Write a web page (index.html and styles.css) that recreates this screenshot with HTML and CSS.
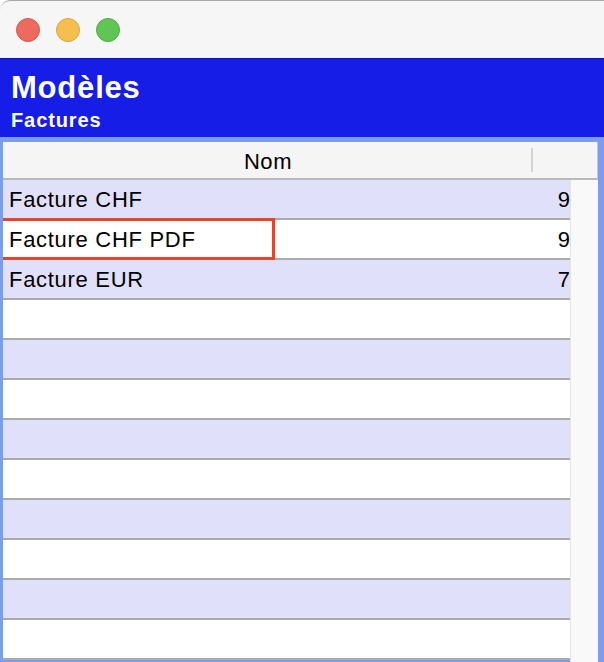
FILE: index.html
```
<!DOCTYPE html>
<html lang="fr">
<head>
<meta charset="utf-8">
<title>Modèles</title>
<link rel="stylesheet" href="styles.css">
</head>
<body>
<div class="window">
  <div class="titlebar">
    <span class="light red"></span>
    <span class="light yellow"></span>
    <span class="light green"></span>
  </div>
  <div class="banner">
    <div class="title">Modèles</div>
    <div class="subtitle">Factures</div>
  </div>
  <div class="frame">
    <div class="thead">
      <div class="th th-name">Nom</div>
      <div class="th th-num"></div>
    </div>
    <div class="tbody-wrap">
      <div class="tbody">
        <div class="row alt"><span class="name">Facture CHF</span><span class="num">9</span></div>
        <div class="row selected"><span class="name">Facture CHF PDF</span><span class="num">9</span><span class="mark"></span></div>
        <div class="row alt"><span class="name">Facture EUR</span><span class="num">7</span></div>
        <div class="row"></div>
        <div class="row alt"></div>
        <div class="row"></div>
        <div class="row alt"></div>
        <div class="row"></div>
        <div class="row alt"></div>
        <div class="row"></div>
        <div class="row alt"></div>
        <div class="row"></div>
      </div>
      <div class="scroll"></div>
    </div>
  </div>
</div>
</body>
</html>
```
FILE: styles.css
```
html, body {
  margin: 0;
  padding: 0;
  background: #ffffff;
  width: 604px;
  height: 662px;
  overflow: hidden;
}
body {
  font-family: "Liberation Sans", Arial, sans-serif;
}
.window {
  width: 604px;
  height: 662px;
  display: flex;
  flex-direction: column;
}
.titlebar {
  height: 57px;
  background: #f6f6f6;
  border-top: 1px solid #a9a9a9;
  border-top-left-radius: 10px;
  display: flex;
  align-items: center;
  gap: 16px;
  padding-left: 16px;
  box-sizing: content-box;
  flex: none;
}
.light {
  width: 22px;
  height: 22px;
  border-radius: 50%;
  display: block;
}
.red { background: #ed6a5e; border: 1px solid #d4584c; }
.yellow { background: #f5bf4f; border: 1px solid #d9a63f; }
.green { background: #61c554; border: 1px solid #51a945; }
.banner {
  background: #151de6;
  border-top: 1px solid #0c12c8;
  height: 79px;
  padding: 11px 0 0 11px;
  box-sizing: border-box;
  color: #ffffff;
  font-weight: bold;
  flex: none;
}
.title {
  font-size: 31px;
  line-height: 36px;
  letter-spacing: 0.8px;
}
.subtitle {
  font-size: 20px;
  line-height: 22px;
  margin-top: 3px;
  letter-spacing: 0.9px;
}
.frame {
  flex: 1;
  background: #7c9de9;
  padding: 5px 6px 0 3px;
  display: flex;
  flex-direction: column;
  min-height: 0;
}
.thead {
  display: flex;
  height: 38px;
  background: #f5f5f5;
  border-bottom: 2px solid #b8b8b8;
  border-right: 1px solid #c4c4c4;
  box-sizing: border-box;
  flex: none;
}
.th {
  display: flex;
  align-items: center;
  justify-content: center;
  font-size: 22px;
  letter-spacing: 0.6px;
  color: #000;
  padding-top: 3px;
  box-sizing: border-box;
}
.th-name {
  width: 530px;
  position: relative;
}
.th-name::after {
  content: "";
  position: absolute;
  right: 0;
  top: 6px;
  bottom: 6px;
  width: 2px;
  background: #d4d4d4;
}
.th-num { flex: 1; }
.tbody-wrap {
  flex: 1;
  display: flex;
  min-height: 0;
}
.tbody {
  width: 567px;
  overflow: hidden;
}
.row {
  height: 40px;
  box-sizing: border-box;
  border-bottom: 2px solid #aaaaaa;
  background: #ffffff;
  display: flex;
  align-items: center;
  justify-content: space-between;
  padding-left: 6px;
  font-size: 22px;
  color: #000;
  position: relative;
}
.row.alt { background: #e0e0fa; }
.name { padding-top: 2px; letter-spacing: 0.7px; }
.num { padding-top: 2px; margin-right: 0; }
.mark {
  position: absolute;
  left: -3px;
  top: -2px;
  width: 275px;
  height: 42px;
  border: 3px solid #e8432b;
  box-sizing: border-box;
}
.scroll {
  width: 27px;
  background: #f9f9f9;
  border-left: 1px solid #e4e4e4;
}
```
